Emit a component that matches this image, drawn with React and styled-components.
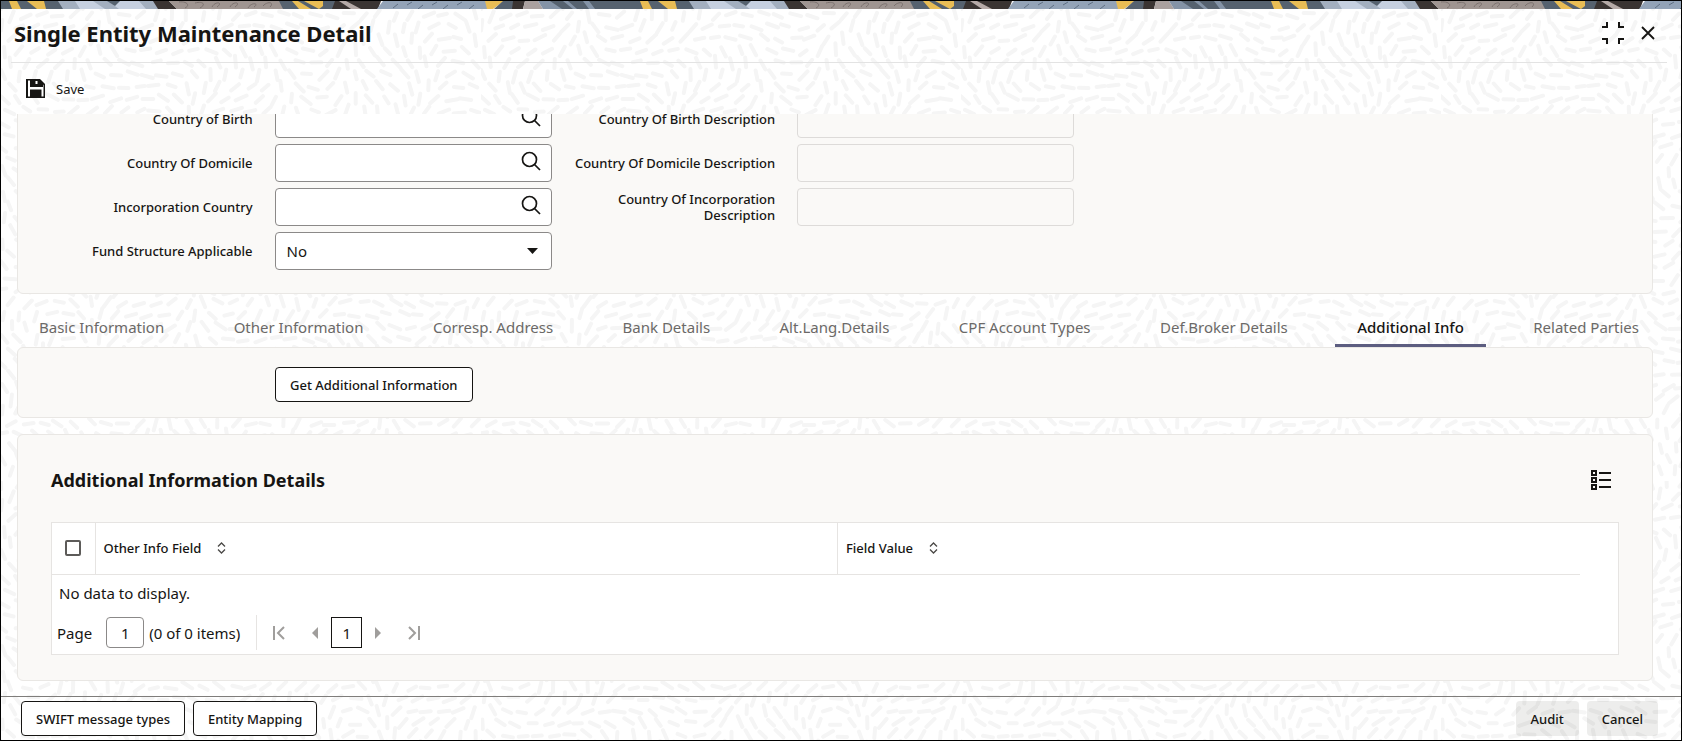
import { useState } from "react";
import styled, { createGlobalStyle } from "styled-components";

const GlobalStyle = createGlobalStyle`
  * {
    box-sizing: border-box;
  }

  body {
    margin: 0;
    font-family: "Noto Sans", "Open Sans", sans-serif;
    font-size: 15px;
    color: #161513;
  }

  button, input, select {
    font-family: inherit;
    color: inherit;
  }
`;

const svgUrl = (svg) => `url("data:image/svg+xml,${encodeURIComponent(svg)}")`;

// short strokes that follow a slowly turning direction
const makeTexture = () => {
  const size = 480;
  const step = 12;
  let seed = 7;
  const random = () => {
    seed = (seed * 16807) % 2147483647;
    return seed / 2147483647;
  };
  let d = "";
  for (let row = 0; row * step < size; row++) {
    for (let x = 0; x < size; x += 16) {
      const cx = x + (row % 2) * 8 + random() * 4;
      const cy = row * step + random() * 4;
      const u = (cx / size) * Math.PI * 2;
      const v = (cy / size) * Math.PI * 2;
      const angle =
        1.5 * Math.sin(2 * u + v) + 1.3 * Math.cos(2 * v - u) + random() * 0.5;
      const half = 4 + random() * 2;
      const dx = Math.cos(angle) * half;
      const dy = Math.sin(angle) * half;
      d += `M${(cx - dx).toFixed(1)} ${(cy - dy).toFixed(1)}L${(cx + dx).toFixed(1)} ${(cy + dy).toFixed(1)}`;
    }
  }
  return svgUrl(
    `<svg xmlns="http://www.w3.org/2000/svg" width="${size}" height="${size}"><path d="${d}" stroke="#f5f5f5" stroke-width="4" stroke-linecap="round"/></svg>`
  );
};

const texture = makeTexture();

const stripes = [
  ["#56626f", "0,0 70,0 70,8 0,8"],
  ["#e9bd55", "8,0 16,0 20,8 11,8"],
  ["#e9bd55", "26,0 43,0 45,8 36,8"],
  ["#a3afbf", "57,0 76,0 84,8 62,8"],
  ["#c6d0e0", "74,0 160,0 160,8 79,8"],
  ["#a3afbf", "92,0 107,0 118,8 104,8"],
  ["#56626f", "106,0 119,0 114,5"],
  ["#a3afbf", "138,0 155,0 160,8 145,8"],
  ["#3a3432", "152,0 168,0 176,8 157,8"],
  ["#9f9591", "168,0 285,0 285,8 176,8"],
  ["#56626f", "278,0 335,0 335,8 282,8"],
  ["#e9bd55", "291,0 297,0 310,8 298,8"],
  ["#e9bd55", "303,0 322,0 322,5 318,8"],
  ["#3a3432", "334,0 380,0 377,8 331,8"],
  ["#b5aaa7", "338,0 345,0 360,8 350,8"],
  ["#93a3b7", "382,0 490,0 490,8 376,8"],
  ["#e9bd55", "484,0 503,0 492,8 486,8"],
  ["#56626f", "502,0 512,0 512,8 493,8"],
  ["#3a3432", "512,0 524,0 522,8 511,8"],
  ["#aaa19f", "524,0 537,0 542,8 522,8"],
  ["#8493a6", "537,0 631,0 631,8 542,8"],
  ["#56626f", "549,0 562,0 572,8 561,8"],
  ["#56626f", "567,0 582,0 588,8 576,8"],
  ["#56626f", "588,0 631,0 631,8 594,8"],
];

const squiggles =
  "M178 1c7-1 12 3 6 6M194 2c7-2 12 1 5 5M211 6c3-6 12-5 5 0M229 6c3-6 12-5 5 0M247 7c3-6 12-5 6-1M262 5c4-5 12-4 7 1";
const slashes =
  "M392 7l5-4M406 4l5-3M417 8l5-4M431 4l5-3M442 8l5-4M456 4l5-3M468 8l5-4";

const banner = svgUrl(
  `<svg xmlns="http://www.w3.org/2000/svg" width="631" height="8">${stripes
    .map(([fill, points]) => `<polygon fill="${fill}" points="${points}"/>`)
    .join("")}<path d="${squiggles}" fill="none" stroke="#7b716e"/><path d="${slashes}" stroke="#5f6f83"/></svg>`
);

const Screen = styled.div`
  display: flex;
  flex-direction: column;
  height: 100vh;
  border: 1px solid #000000;
  background: #ffffff ${texture};
`;

const Banner = styled.div`
  flex: none;
  height: 8px;
  background: ${banner} repeat-x;
`;

const Header = styled.header`
  display: flex;
  align-items: center;
  justify-content: space-between;
  height: 54px;
  margin: 0 14px 0 10px;
  padding: 0 11px 6px 3px;
  border-bottom: 1px solid #e3e3e3;
`;

const Title = styled.h1`
  margin: 0;
  font-size: 22px;
  line-height: 32px;
  font-weight: 700;
`;

const HeaderActions = styled.div`
  display: flex;
  align-items: center;
  gap: 16px;
`;

const IconButton = styled.button`
  display: flex;
  align-items: center;
  justify-content: center;
  padding: 0;
  border: none;
  background: none;
  cursor: pointer;
`;

const Toolbar = styled.div`
  display: flex;
  align-items: center;
  height: 51px;
  padding: 0 25px;
`;

const SaveButton = styled(IconButton)`
  gap: 11px;
  font-size: 13px;
`;

const Body = styled.main`
  flex: 1;
  display: flex;
  flex-direction: column;
  justify-content: flex-end;
  min-height: 0;
  padding: 0 28px 15px 16px;
  overflow: hidden;
`;

const Panel = styled.section`
  flex: none;
  padding: ${(props) => props.$padding};
  border: 1px solid #e9e7e4;
  border-radius: 6px;
  background-color: #faf9f7;
`;

const DetailsPanel = styled(Panel)`
  margin-top: 16px;
`;

const FieldGrid = styled.div`
  display: grid;
  grid-template-columns: repeat(3, 1fr);
  gap: 6px 22px;
  margin-right: 22px;
`;

const FieldRow = styled.div`
  grid-column: ${(props) => props.$column};
  display: grid;
  grid-template-columns: 8fr 11fr;
  align-items: center;
  gap: 22px;
  height: 38px;

  label {
    font-size: 13px;
    line-height: 16px;
    font-weight: 500;
    text-align: right;
  }
`;

const FieldBox = styled.div`
  display: flex;
  align-items: center;
  height: 38px;
  padding-right: 10px;
  border: 1px solid #8b8988;
  border-radius: 4px;
  background-color: #ffffff;
`;

const FieldInput = styled.input`
  flex: 1;
  min-width: 0;
  height: 36px;
  padding: 0 11px;
  border: none;
  outline: none;
  background: none;
  font-size: 15px;
`;

const SearchButton = styled(IconButton)`
  padding-bottom: 4px;
`;

const ReadOnlyInput = styled.input`
  width: 100%;
  height: 38px;
  padding: 0 11px;
  border: 1px solid #dddbd9;
  border-radius: 4px;
  background: none;
  font-size: 15px;
`;

const Select = styled.select`
  flex: 1;
  height: 36px;
  padding: 0 11px;
  border: none;
  outline: none;
  background: none;
  appearance: none;
  font-size: 15px;
`;

const Tabs = styled.nav`
  flex: none;
  display: flex;
  justify-content: space-between;
  margin: 16px -8px 0 0;
`;

const Tab = styled.button`
  height: 37px;
  padding: 0 22px;
  border: none;
  border-bottom: 3px solid ${(props) => (props.$active ? "#5c5d80" : "transparent")};
  background: none;
  font-size: 15px;
  line-height: 20px;
  white-space: nowrap;
  font-weight: ${(props) => (props.$active ? 500 : 400)};
  color: ${(props) => (props.$active ? "#161513" : "#6b6967")};
  cursor: pointer;
`;

const ActionRow = styled.div`
  padding-left: 224px;
`;

const Button = styled.button`
  height: 35px;
  padding: 0 14px;
  border: 1px solid ${(props) => (props.$muted ? "transparent" : "#161513")};
  border-radius: 4px;
  background-color: ${(props) => (props.$muted ? "rgba(22, 21, 19, 0.08)" : "#ffffff")};
  font-size: 13px;
  font-weight: 500;
  cursor: pointer;
`;

const SectionHeader = styled.div`
  display: flex;
  align-items: center;
  justify-content: space-between;
  height: 32px;
  margin-bottom: 26px;
  padding-right: 8px;
`;

const SectionTitle = styled.h2`
  margin: 0;
  font-size: 18px;
  line-height: 24px;
  font-weight: 700;
`;

const TableFrame = styled.div`
  border: 1px solid #e6e4e2;
  background-color: #ffffff;
`;

const Table = styled.table`
  width: calc(100% - 38px);
  table-layout: fixed;
  border-collapse: collapse;

  th {
    height: 51px;
    padding: 0 8px;
    border-bottom: 1px solid #e6e4e2;
    font-size: 13px;
    font-weight: 500;
    text-align: left;
  }

  th + th {
    border-left: 1px solid #e6e4e2;
  }

  th:first-child {
    width: 43px;
    padding: 0 13px;
  }

  td {
    height: 37px;
    padding: 0 7px;
  }
`;

const Checkbox = styled.input`
  display: block;
  width: 16px;
  height: 16px;
  margin: 0;
  border: 2px solid #5d5b59;
  border-radius: 2px;
  background-color: #ffffff;
  appearance: none;
`;

const ColumnHeader = styled.div`
  display: flex;
  align-items: center;
  gap: 16px;
`;

const Pager = styled.div`
  display: flex;
  align-items: center;
  height: 43px;
  padding: 0 5px;
`;

const PageInput = styled.input`
  width: 38px;
  height: 31px;
  margin: 0 5px 0 14px;
  padding: 0;
  border: 1px solid #8b8988;
  border-radius: 4px;
  font-size: 15px;
  text-align: center;
`;

const PagerNav = styled.div`
  display: flex;
  align-items: center;
  gap: 13px;
  height: 35px;
  margin-left: 16px;
  padding-left: 16px;
  border-left: 1px solid #e6e4e2;

  svg {
    color: #a09e9c;
  }

  button:first-child {
    margin-right: 13px;
  }

  button:last-child {
    margin-left: 13px;
  }
`;

const CurrentPage = styled.button`
  width: 31px;
  height: 31px;
  padding: 0;
  border: 1px solid #161513;
  background-color: #ffffff;
  font-size: 15px;
`;

const Footer = styled.footer`
  display: flex;
  justify-content: space-between;
  padding: 4px 23px 4px 20px;
  border-top: 1px solid #7f7d7b;
`;

const ButtonGroup = styled.div`
  display: flex;
  gap: 8px;
`;

const CompressIcon = () => (
  <svg width="22" height="22" viewBox="0 0 22 22" fill="none" stroke="currentColor" strokeWidth="2">
    <path d="M0 5h5V0M17 0v5h5M0 17h5v5M17 22v-5h5" />
  </svg>
);

const CloseIcon = () => (
  <svg width="16" height="16" viewBox="0 0 16 16" fill="none" stroke="currentColor" strokeWidth="1.800">
    <path d="M2 2l12 12M14 2L2 14" />
  </svg>
);

const SaveIcon = () => (
  <svg width="19" height="19" viewBox="0 0 19 19">
    <path fill="currentColor" d="M0 0h14l5 5v14H0z" />
    <path fill="#ffffff" d="M2 1.500h2v6.500h9V1.500l4.500 4.500V17.500h-2V10.500H4v7H2z" />
    <path fill="currentColor" d="M13 1h1.500l2.500 3v4h-4z" />
    <path fill="#ffffff" d="M9.500 2h2v3h-2z" />
  </svg>
);

const SearchIcon = () => (
  <svg width="20" height="20" viewBox="0 0 20 20" fill="none" stroke="currentColor" strokeWidth="1.700">
    <circle cx="8.500" cy="8.500" r="7" />
    <path d="M13.500 13.500l5.500 5.500" />
  </svg>
);

const CaretIcon = () => (
  <svg width="18" height="6" viewBox="0 0 18 6" fill="currentColor">
    <path d="M4 0h11L9.500 6z" />
  </svg>
);

const ListIcon = () => (
  <svg width="20" height="20" viewBox="0 0 20 20" fill="none" stroke="currentColor" strokeWidth="2">
    <path d="M1 1h4v4H1zM1 8h4v4H1zM1 15h4v4H1zM8 3h12M8 10h12M8 17h12" />
  </svg>
);

const SortIcon = () => (
  <svg width="9" height="12" viewBox="0 0 9 12" fill="none" stroke="#4a4846" strokeWidth="1.300">
    <path d="M1 4.500L4.500 1 8 4.500M1 7.500L4.500 11 8 7.500" />
  </svg>
);

const EdgeIcon = ({ flip }) => (
  <svg width="13" height="14" viewBox="0 0 13 14" fill="none" stroke="currentColor" strokeWidth="2">
    <path d={flip ? "M12 0v14M2 1l6 6-6 6" : "M1 0v14M11 1L5 7l6 6"} />
  </svg>
);

const StepIcon = ({ flip }) => (
  <svg width="6" height="12" viewBox="0 0 6 12" fill="currentColor">
    <path d={flip ? "M0 0l6 6-6 6z" : "M6 0L0 6l6 6z"} />
  </svg>
);

const lookups = [
  { id: "birth", label: "Country of Birth", description: "Country Of Birth Description" },
  { id: "domicile", label: "Country Of Domicile", description: "Country Of Domicile Description" },
  { id: "incorporation", label: "Incorporation Country", description: "Country Of Incorporation Description" },
];

const tabs = [
  "Basic Information",
  "Other Information",
  "Corresp. Address",
  "Bank Details",
  "Alt.Lang.Details",
  "CPF Account Types",
  "Def.Broker Details",
  "Additional Info",
  "Related Parties",
];

const LookupFields = ({ id, label, description }) => (
  <>
    <FieldRow $column={1}>
      <label htmlFor={id}>{label}</label>
      <FieldBox>
        <FieldInput type="text" id={id} />
        <SearchButton aria-label={`Search ${label}`}>
          <SearchIcon />
        </SearchButton>
      </FieldBox>
    </FieldRow>
    <FieldRow $column={2}>
      <label htmlFor={`${id}-description`}>{description}</label>
      <ReadOnlyInput type="text" id={`${id}-description`} readOnly />
    </FieldRow>
  </>
);

const InfoTable = () => (
  <Table>
    <thead>
      <tr>
        <th>
          <Checkbox type="checkbox" aria-label="Select all rows" />
        </th>
        <th>
          <ColumnHeader>
            Other Info Field
            <SortIcon />
          </ColumnHeader>
        </th>
        <th>
          <ColumnHeader>
            Field Value
            <SortIcon />
          </ColumnHeader>
        </th>
      </tr>
    </thead>
    <tbody>
      <tr>
        <td colSpan={3}>No data to display.</td>
      </tr>
    </tbody>
  </Table>
);

export default function App() {
  const [activeTab, setActiveTab] = useState("Additional Info");

  return (
    <Screen>
      <GlobalStyle />
      <Banner />
      <Header>
        <Title>Single Entity Maintenance Detail</Title>
        <HeaderActions>
          <IconButton aria-label="Collapse">
            <CompressIcon />
          </IconButton>
          <IconButton aria-label="Close">
            <CloseIcon />
          </IconButton>
        </HeaderActions>
      </Header>
      <Toolbar>
        <SaveButton>
          <SaveIcon />
          Save
        </SaveButton>
      </Toolbar>

      <Body>
        <Panel $padding="24px 33px 23px">
          <FieldGrid>
            {lookups.map((lookup) => (
              <LookupFields key={lookup.id} {...lookup} />
            ))}
            <FieldRow $column={1}>
              <label htmlFor="fund">Fund Structure Applicable</label>
              <FieldBox>
                <Select id="fund" defaultValue="No">
                  <option>No</option>
                  <option>Yes</option>
                </Select>
                <CaretIcon />
              </FieldBox>
            </FieldRow>
          </FieldGrid>
        </Panel>

        <Tabs>
          {tabs.map((tab) => (
            <Tab key={tab} $active={tab === activeTab} onClick={() => setActiveTab(tab)}>
              {tab}
            </Tab>
          ))}
        </Tabs>

        <Panel $padding="19px 33px 15px">
          <ActionRow>
            <Button>Get Additional Information</Button>
          </ActionRow>
        </Panel>

        <DetailsPanel $padding="29px 33px 25px">
          <SectionHeader>
            <SectionTitle>Additional Information Details</SectionTitle>
            <IconButton aria-label="Show as list">
              <ListIcon />
            </IconButton>
          </SectionHeader>
          <TableFrame>
            <InfoTable />
            <Pager>
              <label htmlFor="page">Page</label>
              <PageInput type="text" id="page" defaultValue="1" />
              <span>(0 of 0 items)</span>
              <PagerNav>
                <IconButton aria-label="First page">
                  <EdgeIcon />
                </IconButton>
                <IconButton aria-label="Previous page">
                  <StepIcon />
                </IconButton>
                <CurrentPage>1</CurrentPage>
                <IconButton aria-label="Next page">
                  <StepIcon flip />
                </IconButton>
                <IconButton aria-label="Last page">
                  <EdgeIcon flip />
                </IconButton>
              </PagerNav>
            </Pager>
          </TableFrame>
        </DetailsPanel>
      </Body>

      <Footer>
        <ButtonGroup>
          <Button>SWIFT message types</Button>
          <Button>Entity Mapping</Button>
        </ButtonGroup>
        <ButtonGroup>
          <Button $muted>Audit</Button>
          <Button $muted>Cancel</Button>
        </ButtonGroup>
      </Footer>
    </Screen>
  );
}
